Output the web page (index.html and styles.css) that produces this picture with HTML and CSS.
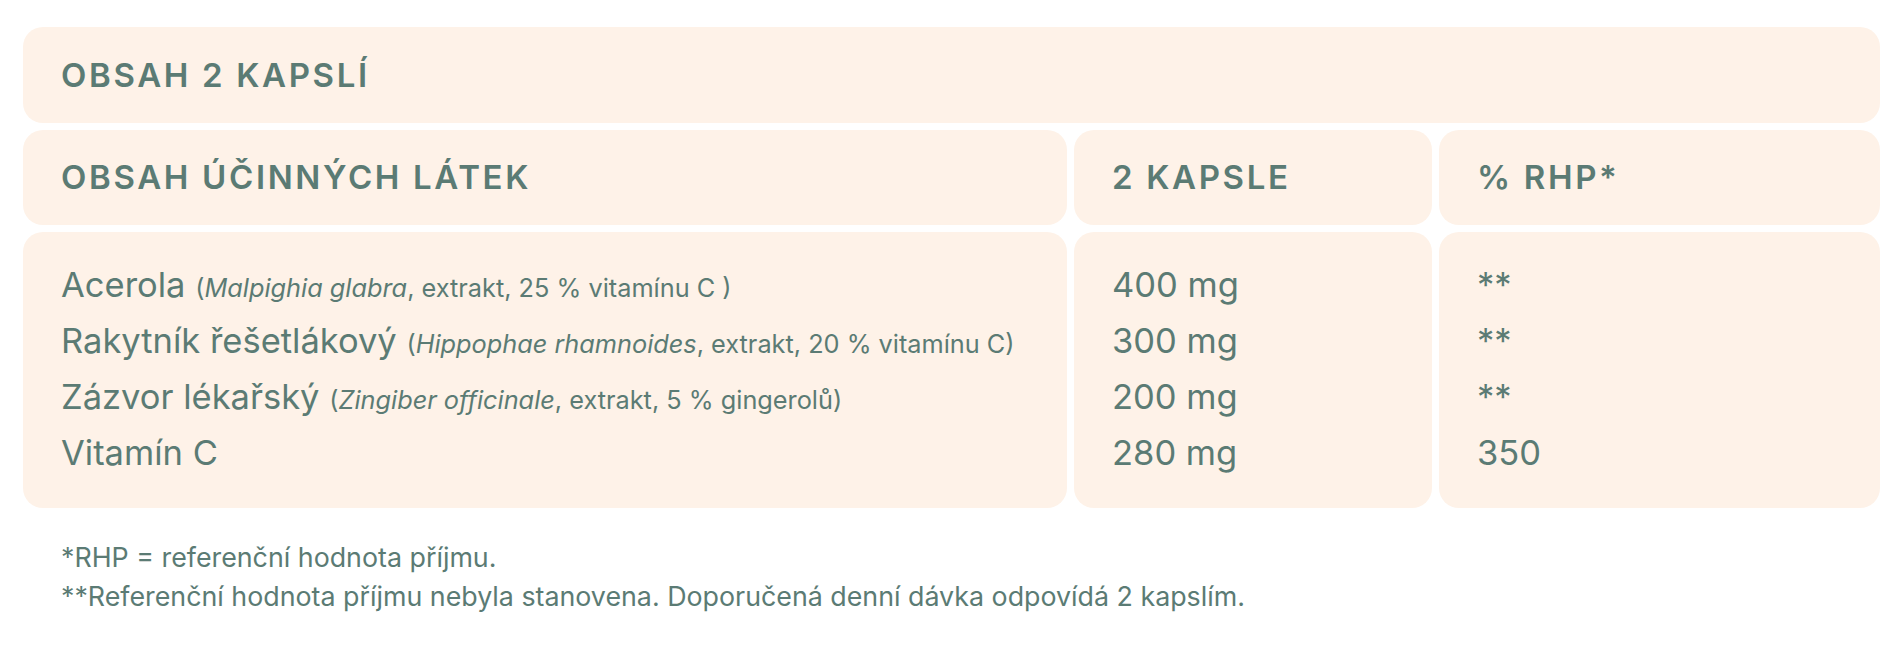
FILE: index.html
```html
<!DOCTYPE html>
<html lang="cs">
<head>
<meta charset="utf-8">
<title>Obsah 2 kapslí</title>
<link rel="stylesheet" href="styles.css">
</head>
<body>
<div class="page">
  <div class="card title">OBSAH 2 KAPSLÍ</div>
  <div class="row head">
    <div class="card cell">OBSAH ÚČINNÝCH LÁTEK</div>
    <div class="card cell">2 KAPSLE</div>
    <div class="card cell">% RHP*</div>
  </div>
  <div class="row body">
    <div class="card cell">
      <div class="line">Acerola <span class="note">(<i>Malpighia glabra</i>, extrakt, 25 % vitamínu C )</span></div>
      <div class="line">Rakytník řešetlákový <span class="note">(<i>Hippophae rhamnoides</i>, extrakt, 20 % vitamínu C)</span></div>
      <div class="line">Zázvor lékařský <span class="note">(<i>Zingiber officinale</i>, extrakt, 5 % gingerolů)</span></div>
      <div class="line">Vitamín C</div>
    </div>
    <div class="card cell">
      <div class="line">400 mg</div>
      <div class="line">300 mg</div>
      <div class="line">200 mg</div>
      <div class="line">280 mg</div>
    </div>
    <div class="card cell">
      <div class="line">**</div>
      <div class="line">**</div>
      <div class="line">**</div>
      <div class="line">350</div>
    </div>
  </div>
  <div class="foot">
    <p>*RHP = referenční hodnota příjmu.</p>
    <p>**Referenční hodnota příjmu nebyla stanovena. Doporučená denní dávka odpovídá 2 kapslím.</p>
  </div>
</div>
</body>
</html>
```
FILE: styles.css
```css
html, body {
  margin: 0;
  padding: 0;
  background: #ffffff;
}
body {
  font-family: "Inter", "Noto Sans", sans-serif;
  color: #5b7b74;
}
.page {
  padding: 27px 23px 0 23px;
}
.card {
  background: #fef2e8;
  border-radius: 20px;
}
.title {
  padding: 27px 38px;
  line-height: 42px;
  font-size: 33px;
  font-weight: 600;
  letter-spacing: 0.08em;
}
.row {
  display: grid;
  grid-template-columns: 1044fr 358fr 441fr;
  gap: 7px;
  margin-top: 7px;
}
.head .cell {
  padding: 27px 38px;
  line-height: 41px;
  font-size: 33px;
  font-weight: 600;
  letter-spacing: 0.08em;
}
.body .cell {
  padding: 25px 38px 27px 38px;
}
.line {
  font-size: 34.5px;
  line-height: 56px;
  white-space: nowrap;
}
.note {
  font-size: 25.3px;
  line-height: 1;
}
.foot {
  margin-top: 29.5px;
  font-size: 26.8px;
  line-height: 39px;
  padding-left: 38px;
}
.foot p {
  margin: 0;
}
```
